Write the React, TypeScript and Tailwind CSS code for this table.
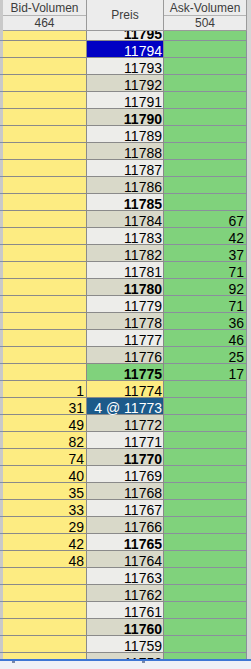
// Orderbuch-Leiter (Bid / Preis / Ask)

const ASK: Record<number, number> = {
  11784: 67, 11783: 42, 11782: 37, 11781: 71, 11780: 92,
  11779: 71, 11778: 36, 11777: 46, 11776: 25, 11775: 17,
}

const BID: Record<number, number> = {
  11774: 1, 11773: 31, 11772: 49, 11771: 82, 11770: 74, 11769: 40,
  11768: 35, 11767: 33, 11766: 29, 11765: 42, 11764: 48,
}

const preise = Array.from({ length: 38 }, (_, i) => 11795 - i)

function preisZelle(p: number) {
  if (p === 11794) return 'bg-[#0000c4] text-white'
  if (p === 11775) return 'bg-[#80d27c] text-black'
  if (p === 11774) return 'bg-[#fdec82] text-black'
  if (p === 11773) return 'bg-[#1c5a8a] text-white'
  return p % 2 === 0 ? 'bg-[#d9d9c9] text-black' : 'bg-[#ededea] text-black'
}

function Zeile({ p }: { p: number }) {
  const fett = p % 5 === 0
  return (
    <div className="flex h-[17px]">
      <div className="w-[3px] bg-[#c9c9c9] border-b border-[#7c8fb0]" />
      <div className="w-[84px] bg-[#fdec82] border-r border-b border-[#8a8a8a] h-[17px] pt-[3px] pr-[2px] text-right leading-[14px]">
        {BID[p] ?? ''}
      </div>
      <div
        className={`w-[77px] border-r border-b border-[#8a8a8a] h-[17px] pt-[3px] pr-[1px] text-right leading-[14px] ${preisZelle(p)} ${fett ? 'font-bold' : ''}`}
      >
        {p === 11773 ? '4 @ 11773' : p}
      </div>
      <div className="w-[83px] bg-[#80d27c] border-r border-b border-[#8a8f9c] h-[17px] pt-[3px] pr-[2px] text-right leading-[14px]">
        {ASK[p] ?? ''}
      </div>
      <div className="w-[4px] bg-[#d6d6d6]" />
    </div>
  )
}

export default function App() {
  return (
    <div
      className="w-[251px] h-[669px] bg-[#d6d6d6] flex flex-col overflow-hidden text-[14px] text-black"
      style={{ fontFamily: '"Liberation Sans", Arial, sans-serif' }}
    >
      {/* Kopfzeile */}
      <div className="flex h-[31px] text-[12px] text-[#3c3c3c] leading-[14px]">
        <div className="w-[3px] bg-[#c9c9c9]" />
        <div className="w-[84px] flex flex-col bg-[#ececec] border-r border-[#9a9a9a]">
          <div className="h-[16px] border-b border-[#b4b4b4] flex items-center justify-center">Bid-Volumen</div>
          <div className="h-[15px] border-b border-[#9a9a9a] flex items-center justify-center">464</div>
        </div>
        <div className="w-[77px] bg-[#ececec] border-r border-b border-[#9a9a9a] flex items-center justify-center">
          Preis
        </div>
        <div className="w-[83px] flex flex-col bg-[#ececec] border-r border-[#9a9a9a]">
          <div className="h-[16px] border-b border-[#b4b4b4] flex items-center justify-center">Ask-Volumen</div>
          <div className="h-[15px] border-b border-[#9a9a9a] flex items-center justify-center">504</div>
        </div>
        <div className="w-[4px] bg-[#d6d6d6]" />
      </div>

      {/* Preisleiter */}
      <div className="h-[628px] overflow-hidden">
        <div className="-mt-[7px]">
          {preise.map(p => (
            <Zeile key={p} p={p} />
          ))}
        </div>
      </div>

      {/* Rand unten */}
      <div className="h-[2px] bg-[#3d76d4]" />
      <div className="flex-1 bg-[#eef1f6] flex">
        <div className="ml-[12px] w-[3px] h-[2px] bg-[#7a8aa8]" />
        <div className="ml-[127px] w-[3px] h-[2px] bg-[#7a8aa8]" />
      </div>
    </div>
  )
}
